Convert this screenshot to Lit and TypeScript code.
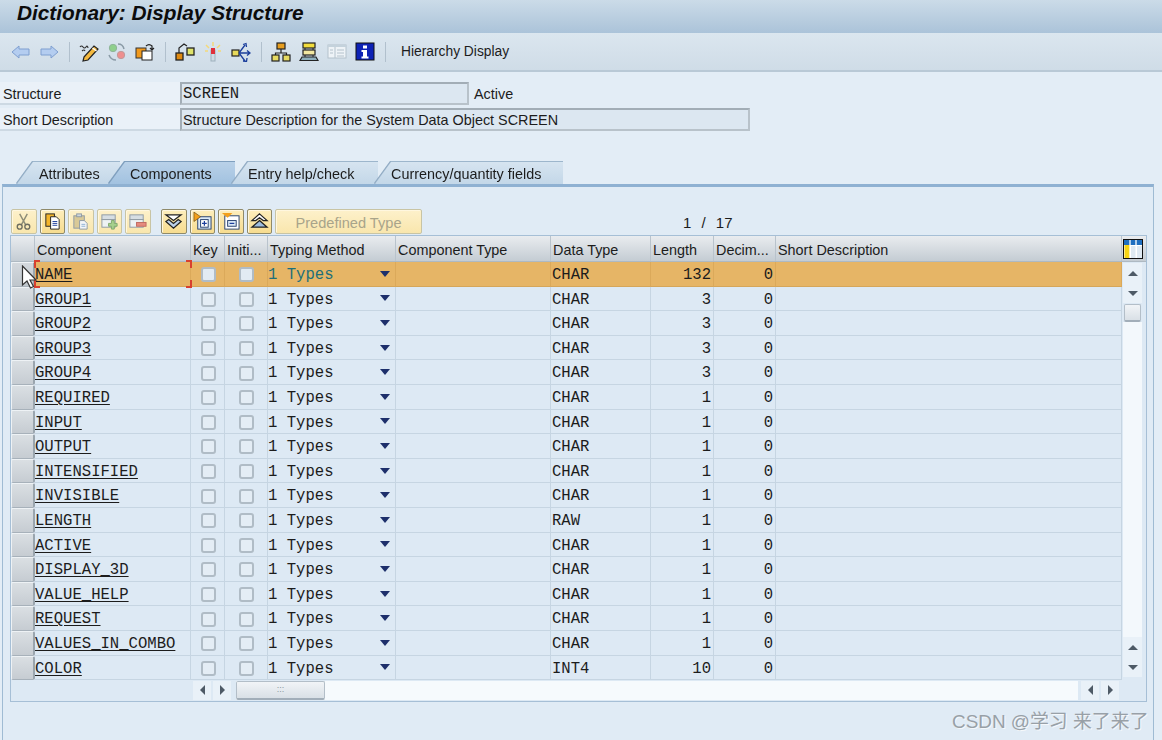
import { LitElement, html, css, svg } from "lit";
import { customElement } from "lit/decorators.js";

const ROWS: [string, string, string, string][] = [
  ["NAME", "CHAR", "132", "0"],
  ["GROUP1", "CHAR", "3", "0"],
  ["GROUP2", "CHAR", "3", "0"],
  ["GROUP3", "CHAR", "3", "0"],
  ["GROUP4", "CHAR", "3", "0"],
  ["REQUIRED", "CHAR", "1", "0"],
  ["INPUT", "CHAR", "1", "0"],
  ["OUTPUT", "CHAR", "1", "0"],
  ["INTENSIFIED", "CHAR", "1", "0"],
  ["INVISIBLE", "CHAR", "1", "0"],
  ["LENGTH", "RAW", "1", "0"],
  ["ACTIVE", "CHAR", "1", "0"],
  ["DISPLAY_3D", "CHAR", "1", "0"],
  ["VALUE_HELP", "CHAR", "1", "0"],
  ["REQUEST", "CHAR", "1", "0"],
  ["VALUES_IN_COMBO", "CHAR", "1", "0"],
  ["COLOR", "INT4", "10", "0"],
];

const I = (body: unknown) =>
  html`<svg class="ic" viewBox="0 0 20 20" width="20" height="20">${body}</svg>`;

const ICONS: Record<string, unknown> = {
  back: svg`<path d="M1 10 8 4v3h10v6H8v3z" fill="#b4cdf0" stroke="#7f9fd0"/>`,
  fwd: svg`<path d="M19 10 12 4v3H2v6h10v3z" fill="#b4cdf0" stroke="#7f9fd0"/>`,
  pencil: svg`<path d="M5 15 15 4l4 3L9 18l-5 1z" fill="#f4b93f" stroke="#222" stroke-width="1.200"/><path d="M13.500 6l4 3" stroke="#fff" stroke-width="1.500"/><path d="M1 5q1.500-2 3 0t3 0 2 1M3 9q2-2 3 0" fill="none" stroke="#333" stroke-width="1.200"/>`,
  circles: svg`<circle cx="6" cy="6" r="3.700" fill="#8fd08c" stroke="#8fb59a"/><circle cx="14" cy="13" r="3.700" fill="#ee8f8f" stroke="#c09a9a"/><path d="M11 2q5 0 6 5M9 18q-5 0-7-5" fill="none" stroke="#8a9aa6" stroke-width="1.500"/>`,
  copyobj: svg`<rect x="1" y="6" width="10" height="10" fill="#f29a1c" stroke="#333"/><rect x="7" y="9" width="10" height="9" fill="#fff" stroke="#222"/><path d="M11 4q3-3 6 0v3M15 6l2 2 2-2" fill="none" stroke="#222" stroke-width="1.200"/>`,
  where: svg`<rect x="1" y="11" width="7" height="7" fill="#e08a10" stroke="#222" stroke-width="1.300"/><rect x="12" y="6" width="7" height="7" fill="#dfe36a" stroke="#222" stroke-width="1.300"/><path d="M4 11V6l5-4 3 2" fill="none" stroke="#222" stroke-width="1.200"/>`,
  wand: svg`<rect x="8" y="8" width="4" height="11" fill="#cfdbe4" stroke="#9db0bd"/><rect x="8" y="6" width="4" height="6" fill="#e0303a"/><path d="M10 0v4M3 3l3 3M17 3l-3 3M2 9h3M15 9h3" stroke="#f4d97a" stroke-width="1.500"/>`,
  arrows: svg`<rect x="1" y="8" width="7" height="6" fill="#e7d95a" stroke="#222" stroke-width="1.200"/><path d="M8 11h10M8 11l6-8M8 11l6 8M12 2.500l3-1 .5 3.500M16 8.500l3 2.500-3 2.500M12 19l3.500.5.5-3.500" fill="none" stroke="#1c3f9c" stroke-width="1.300"/>`,
  tree: svg`<rect x="6" y="1" width="8" height="6" fill="#e79d1e" stroke="#222" stroke-width="1.200"/><path d="M10 7v4M4.500 13v-2h11v2" fill="none" stroke="#222" stroke-width="1.200"/><rect x="1" y="13" width="7" height="6" fill="#e5da62" stroke="#222" stroke-width="1.200"/><rect x="12" y="13" width="7" height="6" fill="#e5da62" stroke="#222" stroke-width="1.200"/>`,
  stack: svg`<rect x="4" y="1" width="12" height="5" fill="#f2dc3c" stroke="#222" stroke-width="1.200"/><rect x="4" y="8" width="12" height="5" fill="#f2e7a0" stroke="#222" stroke-width="1.200"/><path d="M6 6v2M14 6v2M6 13v2M14 13v2" stroke="#222"/><path d="M1 18.500l2-3.500h14l2 3.500z" fill="#8fb0bd" stroke="#222" stroke-width="1.200"/>`,
  list: svg`<rect x="1" y="3" width="18" height="13" fill="#eef3f7" stroke="#b4c2cc"/><rect x="1" y="3" width="18" height="2" fill="#c4d2dc"/><path d="M8 5v11M3 8h3M3 11h3M10 8h7M10 11h7M10 14h7" stroke="#b4c2cc"/>`,
  info: svg`<rect x="1" y="1" width="18" height="17" fill="#0e22b5" stroke="#111"/><rect x="8" y="3.500" width="4" height="3" fill="#fff"/><path d="M6.500 8h5.500v6.500h1.500v2h-7v-2H8V10H6.500z" fill="#fff"/>`,
  cut: svg`<path d="M6 2l6 11M14 2 8 13" stroke="#8d8d78" stroke-width="1.500"/><circle cx="6" cy="15.500" r="2.600" fill="none" stroke="#6d6d60" stroke-width="1.400"/><circle cx="14" cy="15.500" r="2.600" fill="none" stroke="#6d6d60" stroke-width="1.400"/>`,
  copy: svg`<rect x="3" y="2" width="9" height="13" fill="#f3b52b" stroke="#222"/><path d="M8 5h6l3 3v10H8z" fill="#fff" stroke="#222"/><path d="M10 10h5M10 12h5M10 14h5" stroke="#1d3f9c"/>`,
  paste: svg`<rect x="3" y="4" width="11" height="13" fill="#d9c997" stroke="#8f9aa3"/><rect x="6" y="2" width="5" height="3" fill="#cfd8df" stroke="#8f9aa3"/><path d="M9 9h5l3 3v6H9z" fill="#f4f6f8" stroke="#8f9aa3"/><path d="M11 13h4M11 15h4" stroke="#8eb0d4"/>`,
  ins: svg`<rect x="2" y="3" width="14" height="5" fill="#d7dee3" stroke="#8f9aa3"/><rect x="2" y="8" width="14" height="8" fill="#eef2f4" stroke="#8f9aa3"/><path d="M9 12h3V9h3v3h3v3h-3v3h-3v-3H9z" fill="#a6d08c" stroke="#7fa86a"/>`,
  del: svg`<rect x="2" y="3" width="14" height="5" fill="#d7dee3" stroke="#8f9aa3"/><rect x="2" y="8" width="14" height="8" fill="#eef2f4" stroke="#8f9aa3"/><rect x="9" y="11" width="10" height="4" fill="#e58a7e" stroke="#c0695f"/>`,
  expand: svg`<path d="M2 3h16l-8 6z" fill="#fff" stroke="#222" stroke-width="1.300"/><path d="M5 8 2 10l8 7 8-7-3-2-5 4z" fill="#bcd2ea" stroke="#222" stroke-width="1.300"/>`,
  plus: svg`<rect x="5" y="5" width="14" height="13" fill="#dceaf7" stroke="#26406e"/><path d="M1 0l7 5-7 5z" fill="#f2a01c" stroke="#6b4a10" stroke-width=".7"/><rect x="8" y="8" width="8" height="8" fill="#fff" stroke="#26406e"/><path d="M12 9.500v5M9.500 12h5" stroke="#1d3f9c" stroke-width="1.300"/>`,
  minus: svg`<rect x="4" y="4" width="15" height="14" fill="#fff" stroke="#26406e"/><path d="M1 1h11l-5 5z" fill="#f2a01c"/><rect x="7" y="9" width="9" height="6" fill="#dceaf7" stroke="#26406e"/><path d="M9 12h5" stroke="#1d3f9c" stroke-width="1.300"/>`,
  collapse: svg`<path d="M10 2l8 7h-4l-4-3-4 3H2z" fill="#fff" stroke="#222" stroke-width="1.300"/><path d="M10 9l8 7H2z" fill="#9dbde0" stroke="#222" stroke-width="1.300"/>`,
  settings: svg`<rect x=".5" y=".5" width="19" height="19" fill="#fff" stroke="#111"/><rect x="1" y="1" width="18" height="5" fill="#1f6fc0"/><rect x="1.500" y="6" width="5.500" height="13" fill="#f7d414"/><path d="M7 1v18M13 1v18" stroke="#fff" stroke-width="1.300"/><rect x="8" y="7" width="4.500" height="12" fill="#dfe9f2"/><rect x="14" y="7" width="5" height="12" fill="#dfe9f2"/>`,
};

@customElement("app-root")
export class AppRoot extends LitElement {
  static styles = css`
    :host {
      display: block;
      width: 1162px;
      height: 740px;
      overflow: hidden;
      position: relative;
      background: #e3edf6;
      font-family: "Liberation Sans", Arial, sans-serif;
      font-size: 14.4px;
      color: #1c1c1c;
    }
    .ic { display: block; flex: none; }
    .title {
      height: 33px;
      box-sizing: border-box;
      padding: 0 0 0 17px;
      background: linear-gradient(#cbdbe8, #abc3d9);
      font-size: 20.8px;
      line-height: 25px;
      font-weight: bold;
      font-style: italic;
      color: #0c0c0c;
    }
    .tools {
      height: 39px;
      box-sizing: border-box;
      display: flex;
      align-items: center;
      gap: 8px;
      padding: 0 0 0 11px;
      background: linear-gradient(#dbe6ef, #cfdce7);
      border-bottom: 2px solid #b9c9d6;
    }
    .sep { width: 1px; height: 20px; background: #b1c0cd; margin: 0 1px 0 2px; flex: none; }
    .tools .txt { margin-left: 6px; white-space: nowrap; font-size: 13.8px; }
    .form { padding-top: 10px; height: 90px; box-sizing: border-box; }
    .frow { display: flex; align-items: stretch; height: 23px; margin-bottom: 3px; }
    .lbl {
      width: 180px;
      flex: none;
      box-sizing: border-box;
      padding: 2px 0 0 3px;
      border-bottom: 2px solid #cdd9e3;
      background: #eaf1f8;
      line-height: 20px;
    }
    .fld {
      box-sizing: border-box;
      background: #dce7f1;
      border: 2px solid #b8c2ca;
      border-top-color: #a2adb6;
      border-left-color: #a2adb6;
      padding: 0 0 0 1px;
      line-height: 20px;
      white-space: nowrap;
    }
    .fld.s1 { width: 289px; font-family: "Liberation Mono", monospace; font-size: 15.6px; }
    .fld.s2 { width: 570px; }
    .active { padding: 2px 0 0 5px; line-height: 20px; }
    .tabs { display: flex; height: 22px; padding-left: 17px; }
    .tw { margin-right: -3px; filter: drop-shadow(0 -1px 0 #9db6cc) drop-shadow(-1px 0 0 #8fa9c2); }
    .tw.on { margin-left: -8px; position: relative; filter: drop-shadow(0 -1px 0 #7f9fbe) drop-shadow(-1px 0 0 #7f9fbe); }
    .tab {
      box-sizing: border-box;
      height: 22px;
      line-height: 24px;
      background: linear-gradient(#d6e4f0, #c3d7e8);
      clip-path: polygon(16px 0, 100% 0, 100% 100%, 0 100%);
      white-space: nowrap;
    }
    .tw.on .tab { background: linear-gradient(#b9d1e8, #a2c2e0); }
    .t1 { width: 103px; padding-left: 22px; }
    .t2 { width: 126px; padding-left: 21px; }
    .t3 { width: 146px; padding-left: 16px; }
    .t4 { width: 188px; padding-left: 16px; }
    .panel {
      margin: 0 8px 0 2px;
      height: 560px;
      box-sizing: border-box;
      border: 1px solid #9fbbd3;
      border-top: 3px solid #8fb1d2;
      padding: 22px 6px 0 7px;
      background: #e0ebf5;
    }
    .bar { display: flex; height: 26px; gap: 3px; position: relative; align-items: flex-start; padding-left: 1px; }
    .btn {
      box-sizing: border-box;
      width: 25.500px;
      height: 25px;
      border: 1px solid #8f8a6a;
      border-radius: 2px;
      background: linear-gradient(#fdeebd, #f7dc8f);
      display: flex;
      align-items: center;
      justify-content: center;
      box-shadow: inset 1px 1px 0 #fff7df;
      flex: none;
    }
    .btn.off { border-color: #c8c4a4; background: linear-gradient(#fdf1cb, #f9e6ad); }
    .btn .ic { width: 19px; height: 19px; }
    .gap { width: 4.500px; flex: none; }
    .wide {
      width: 147px;
      color: #a9a48a;
      font-size: 14.6px;
      padding-top: 2px;
    }
    .count {
      flex: 1;
      padding: 5px 0 0 258px;
      line-height: 18px;
      font-size: 15px;
      word-spacing: 6px;
      white-space: pre;
    }
    .tbl {
      box-sizing: border-box;
      width: 1137px;
      height: 467px;
      border: 1px solid #a6bfd6;
      background: #dde9f4;
    }
    .cols { display: grid; grid-template-columns: 24px 156px 34px 43px 128px 155px 100px 63px 62px 346px 25px; }
    .hdr { height: 26px; background: linear-gradient(#e9ecef, #c4ccd3); border-bottom: 1px solid #aeb9c2; box-sizing: border-box; }
    .hdr > div {
      border-right: 1px solid #b9c3cc;
      line-height: 29px;
      padding-left: 2px;
      overflow: hidden;
      white-space: nowrap;
    }
    .hdr > div.set { border: 0; padding: 3px 0 0 1px; }
    .body { display: flex; height: 418px; }
    .rows { width: 1111px; flex: none; }
    .row {
      height: 24.600px;
      box-sizing: border-box;
      display: grid;
      grid-template-columns: 24px 156px 34px 43px 128px 155px 100px 63px 62px 346px;
      grid-template-rows: 24.600px;
      font-family: "Liberation Mono", monospace;
      font-size: 15.6px;
      line-height: 26px;
    }
    .row > div {
      box-sizing: border-box;
      height: 24.600px;
      border-right: 1px solid #c6d5e2;
      border-bottom: 1px solid #c6d5e2;
      overflow: hidden;
      white-space: pre;
    }
    .row > .rh {
      background: linear-gradient(#dadfe3, #c6ccd2);
      border: 1px solid #eef2f5;
      border-right: 2px solid #9aa5ae;
      border-bottom: 1px solid #a7b1ba;
      border-radius: 2px;
    }
    .row .name { text-decoration: underline; text-underline-offset: 2px; }
    .row .dt { padding-left: 1px; }
    .row .num { text-align: right; padding-right: 2px; }
    .row .chk { display: flex; align-items: center; justify-content: center; }
    .box {
      width: 15px;
      height: 15px;
      box-sizing: border-box;
      border: 2px solid #b0bcc6;
      border-radius: 3px;
      background: #e4edf5;
      margin: 2px 0 0 1px;
    }
    .tm { display: flex; justify-content: space-between; align-items: flex-start; padding-right: 5px; }
    .tri { width: 0; height: 0; border: 5.500px solid transparent; border-top: 6px solid #1d2f6b; border-bottom: 0; align-self: center; }
    .sel > div { background: #e6b566; border-right-color: #dba95a; border-bottom-color: #d5a65a; }
    .sel > .rh { background: linear-gradient(#d4d9de, #bfc6cc); }
    .sel .teal { color: #1d6f7a; }
    .sel .box { background: #e2ebf3; }
    .sel .cn { position: relative; overflow: visible; }
    .brk {
      position: absolute;
      left: -1px;
      right: -2px;
      top: -2px;
      height: 28px;
      background:
        linear-gradient(#d8402f, #d8402f) 0 0 / 6px 2px no-repeat,
        linear-gradient(#d8402f, #d8402f) 0 0 / 2px 8px no-repeat,
        linear-gradient(#d8402f, #d8402f) 100% 0 / 6px 2px no-repeat,
        linear-gradient(#d8402f, #d8402f) 100% 0 / 2px 8px no-repeat,
        linear-gradient(#d8402f, #d8402f) 0 100% / 6px 2px no-repeat,
        linear-gradient(#d8402f, #d8402f) 0 100% / 2px 8px no-repeat,
        linear-gradient(#d8402f, #d8402f) 100% 100% / 6px 2px no-repeat,
        linear-gradient(#d8402f, #d8402f) 100% 100% / 2px 8px no-repeat;
    }
    .vs { width: 24px; flex: none; display: flex; flex-direction: column; padding: 1px 4px 3px 1px; box-sizing: border-box; }
    .sb {
      box-sizing: border-box;
      background: #e9f1f8;
      display: flex;
      align-items: center;
      justify-content: center;
      flex: none;
    }
    .vs .sb { width: 19px; height: 20px; }
    .vtrack { flex: 1; background: #f3f8fc; }
    .thumb {
      box-sizing: border-box;
      border: 1px solid #b3bec8;
      border-bottom: 2px solid #a2aeb9;
      border-radius: 2px;
      background: linear-gradient(#f1f4f7, #d9e0e6);
    }
    .vs .thumb { height: 18px; margin: 1px 0 0 1px; width: 17px; flex: none; }
    .up { border: 5px solid transparent; border-bottom: 5.500px solid #4e5a66; border-top: 0; width: 0; height: 0; }
    .dn { border: 5px solid transparent; border-top: 5.500px solid #4e5a66; border-bottom: 0; width: 0; height: 0; }
    .lf { border: 5px solid transparent; border-right: 5.500px solid #4e5a66; border-left: 0; width: 0; height: 0; }
    .rt { border: 5px solid transparent; border-left: 5.500px solid #4e5a66; border-right: 0; width: 0; height: 0; }
    .hs { display: flex; height: 20px; padding: 0 0 0 182px; align-items: center; }
    .hs .sb { width: 18px; height: 19px; margin-right: 2px; }
    .htrack { width: 842px; height: 19px; margin-left: 3px; margin-right: 3px; background: #f6fafd; display: flex; }
    .hs .thumb { width: 89px; height: 19px; color: #8b96a0; text-align: center; font-size: 9px; line-height: 15px; }
    .mark {
      position: absolute;
      left: 952px;
      top: 710px;
      font-family: "Liberation Sans", "Noto Sans CJK SC", sans-serif;
      font-size: 18.900px;
      line-height: 24px;
      color: #98a0a7;
      text-shadow: 1px 1px 0 #f5f8fb;
      white-space: nowrap;
    }
    .cursor { position: absolute; left: 21px; top: 265px; }
  `;

  private ic(n: string) {
    return I(ICONS[n]);
  }

  private btn(n: string, off = false) {
    return html`<div class="btn ${off ? "off" : ""}">${this.ic(n)}</div>`;
  }

  render() {
    return html`
      <div class="title">Dictionary: Display Structure</div>
      <div class="tools">
        ${this.ic("back")}${this.ic("fwd")}<div class="sep"></div>
        ${this.ic("pencil")}${this.ic("circles")}${this.ic("copyobj")}<div class="sep"></div>
        ${this.ic("where")}${this.ic("wand")}${this.ic("arrows")}<div class="sep"></div>
        ${this.ic("tree")}${this.ic("stack")}${this.ic("list")}${this.ic("info")}<div class="sep"></div>
        <span class="txt">Hierarchy Display</span>
      </div>
      <div class="form">
        <div class="frow">
          <div class="lbl">Structure</div>
          <div class="fld s1">SCREEN</div>
          <div class="active">Active</div>
        </div>
        <div class="frow">
          <div class="lbl">Short Description</div>
          <div class="fld s2">Structure Description for the System Data Object SCREEN</div>
        </div>
      </div>
      <div class="tabs">
        <div class="tw"><div class="tab t1">Attributes</div></div>
        <div class="tw on"><div class="tab t2">Components</div></div>
        <div class="tw"><div class="tab t3">Entry help/check</div></div>
        <div class="tw"><div class="tab t4">Currency/quantity fields</div></div>
      </div>
      <div class="panel">
        <div class="bar">
          ${this.btn("cut", true)}${this.btn("copy")}${this.btn("paste", true)}${this.btn("ins", true)}${this.btn("del", true)}
          <div class="gap"></div>
          ${this.btn("expand")}${this.btn("plus")}${this.btn("minus")}${this.btn("collapse")}
          <div class="btn off wide">Predefined Type</div>
          <div class="count">1 / 17</div>
        </div>
        <div class="tbl">
          <div class="cols hdr">
            <div></div><div>Component</div><div>Key</div><div>Initi...</div><div>Typing Method</div>
            <div>Component Type</div><div>Data Type</div><div>Length</div><div>Decim...</div><div>Short Description</div>
            <div class="set">${this.ic("settings")}</div>
          </div>
          <div class="body">
            <div class="rows">
              ${ROWS.map(
                (r, i) => html`<div class="row ${i === 0 ? "sel" : ""}">
                  <div class="rh"></div>
                  <div class="cn"><span class="name">${r[0]}</span>${i === 0
                    ? html`<i class="brk"></i>`
                    : ""}</div>
                  <div class="chk"><span class="box"></span></div>
                  <div class="chk"><span class="box"></span></div>
                  <div class="tm"><span class="teal">1 Types</span><span class="tri"></span></div>
                  <div></div>
                  <div class="dt">${r[1]}</div>
                  <div class="num">${r[2]}</div>
                  <div class="num">${r[3]}</div>
                  <div></div>
                </div>`
              )}
            </div>
            <div class="vs">
              <div class="sb"><i class="up"></i></div>
              <div class="sb"><i class="dn"></i></div>
              <div class="thumb"></div>
              <div class="vtrack"></div>
              <div class="sb"><i class="up"></i></div>
              <div class="sb"><i class="dn"></i></div>
            </div>
          </div>
          <div class="hs">
            <div class="sb"><i class="lf"></i></div>
            <div class="sb"><i class="rt"></i></div>
            <div class="htrack"><div class="thumb">:::</div></div>
            <div class="sb"><i class="lf"></i></div>
            <div class="sb"><i class="rt"></i></div>
          </div>
        </div>
      </div>
      <div class="mark">CSDN @学习 来了来了</div>
      <svg class="cursor" width="18" height="25" viewBox="0 0 18 25">
        <path d="M1.500 1v19l4.500-4 3.500 7 3-1.500-3.500-6.500h6z" fill="#fff" stroke="#333" stroke-width="1.200"/>
      </svg>
    `;
  }
}
